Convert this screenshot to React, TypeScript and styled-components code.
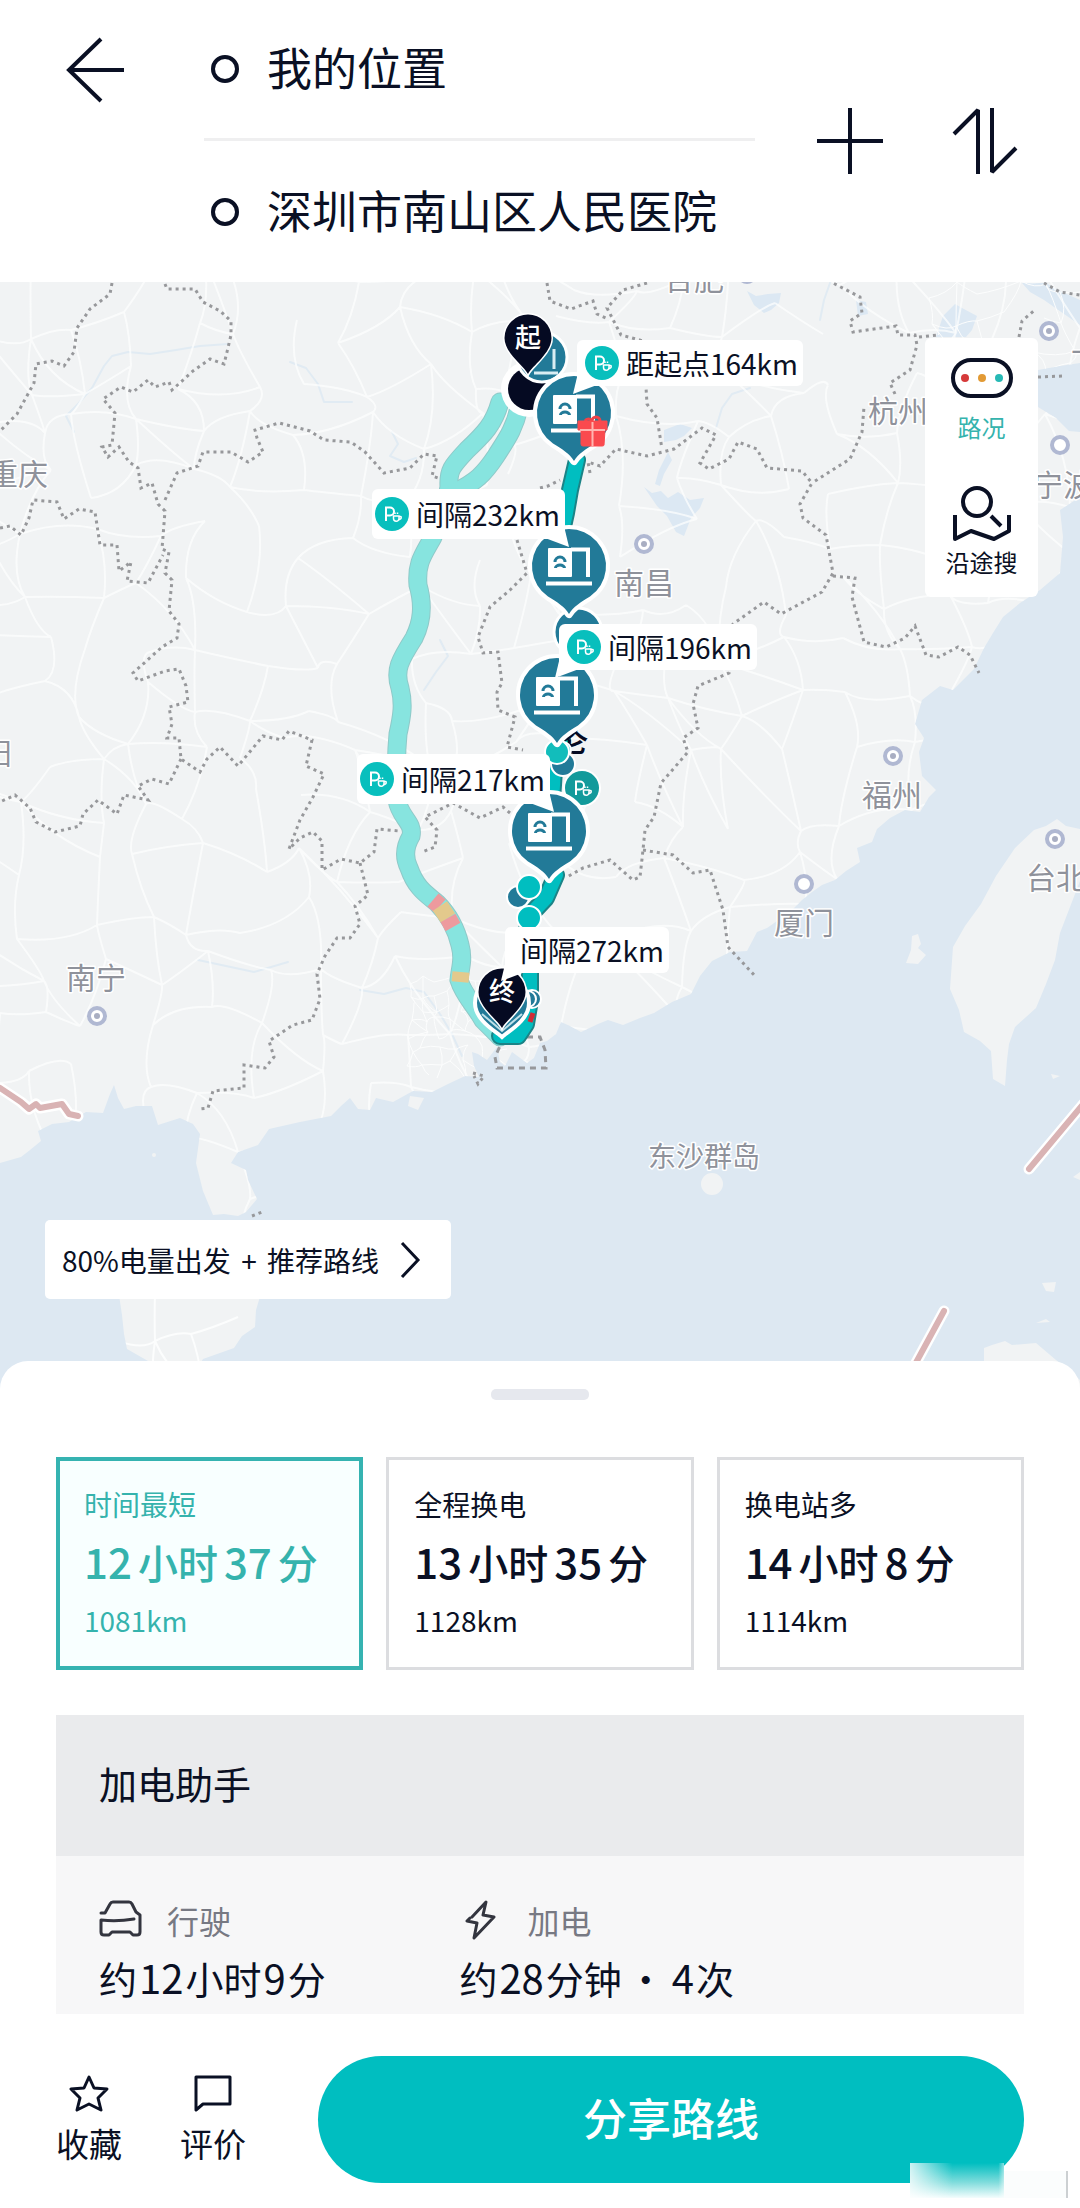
import React, { useState } from "react";
import styled, { createGlobalStyle, css } from "styled-components";

const color = {
  ink: "#0a1024",
  teal: "#00bec0",
  tealText: "#35b3ad",
  station: "#227a98",
  muted: "#777983",
  line: "#dcdde0",
};

const GlobalStyle = createGlobalStyle`
  * { box-sizing: border-box; }
  body {
    margin: 0;
    background: #fff;
    color: ${color.ink};
    font-family: "Noto Sans CJK SC", "Noto Sans", sans-serif;
  }
  button {
    margin: 0;
    padding: 0;
    border: 0;
    background: none;
    color: inherit;
    font: inherit;
    text-align: left;
    cursor: pointer;
  }
  svg { display: block; flex: none; }
`;

/* ---------- header ---------- */

const Header = styled.header`
  display: flex;
  align-items: stretch;
  padding: 0 60px 0 64px;
`;

const BackButton = styled.button`
  display: flex;
  align-items: center;
  width: 140px;
  height: 140px;
`;

const Stops = styled.div`
  flex: 1;
  min-width: 0;
`;

const Stop = styled.button`
  display: flex;
  align-items: center;
  gap: 28px;
  width: 100%;
  height: 138px;
  padding-left: 7px;
  font-size: 45px;
  line-height: 60px;
  white-space: nowrap;

  & + & {
    border-top: 3px solid #efeff0;
    height: 144px;
  }
`;

const StopName = styled.span`
  padding-bottom: 4px;
`;

const Ring = styled.span`
  width: 28px;
  height: 28px;
  border: 4px solid ${color.ink};
  border-radius: 50%;
`;

const HeaderActions = styled.div`
  display: flex;
  align-items: center;
  gap: 66px;
  margin-left: 61px;
`;

/* ---------- map ---------- */

const MapArea = styled.section`
  position: relative;
  height: 1107px;
  overflow: hidden;
  background: #dde8f2;
`;

const MapCanvas = styled.svg`
  width: 100%;
  height: 100%;
`;

const Bubble = styled.div<{ $x: number; $y: number; $tail: "left" | "right" }>`
  position: absolute;
  left: calc(50% + ${(p) => p.$x - 540}px);
  top: ${(p) => p.$y - 282}px;
  display: flex;
  align-items: center;
  gap: 7px;
  height: 46px;
  padding: 0 5px 0 8px;
  border-radius: 6px;
  background: #fff;
  font-size: 28px;
  line-height: 40px;
  white-space: nowrap;

  &::after {
    content: "";
    position: absolute;
    bottom: -8px;
    left: -4px;
    width: 28px;
    height: 26px;
    background: #fff;
    clip-path: polygon(0 100%, 20% 10%, 100% 60%);
  }

  ${(p) =>
    p.$tail === "right" &&
    css`
      height: 50px;
      padding: 0 5px 0 3px;
      &::after {
        left: auto;
        right: -4px;
        clip-path: polygon(100% 100%, 80% 10%, 0 60%);
      }
    `}
`;

const PlainBubble = styled(Bubble)`
  padding: 0 5px 0 15px;
`;

const SidePanel = styled.div`
  position: absolute;
  top: 56px;
  right: 42px;
  display: flex;
  flex-direction: column;
  align-items: center;
  gap: 40px;
  width: 113px;
  padding: 18px 0 17px;
  border-radius: 6px;
  background: #fff;
`;

const SideButton = styled.button<{ $active?: boolean }>`
  display: flex;
  flex-direction: column;
  align-items: center;
  gap: 3px;
  font-size: 24px;
  line-height: 36px;
  color: ${(p) => (p.$active ? color.tealText : color.ink)};
`;

const PlanChip = styled.button`
  position: absolute;
  left: 45px;
  top: 938px;
  display: flex;
  align-items: center;
  gap: 20px;
  height: 79px;
  padding: 0 30px 0 17px;
  border-radius: 5px;
  background: #fff;
  font-size: 28px;
  line-height: 40px;
  white-space: nowrap;
`;

const Plus = styled.span`
  margin: 0 4px;
`;

/* ---------- sheet ---------- */

const Sheet = styled.main`
  position: relative;
  margin-top: -28px;
  padding: 28px 56px 0;
  border-radius: 28px 28px 0 0;
  background: #fff;
`;

const Handle = styled.div`
  width: 98px;
  height: 11px;
  margin: 0 auto 57px;
  border-radius: 5px;
  background: #e6e8ee;
`;

const Routes = styled.div`
  display: grid;
  grid-template-columns: repeat(3, 1fr);
  gap: 23px;
`;

const RouteCard = styled.button<{ $active: boolean }>`
  display: flex;
  flex-direction: column;
  gap: 8px;
  padding: 24px 0 27px 25px;
  border: 3px solid ${color.line};
  background: #fff;
  white-space: nowrap;

  ${(p) =>
    p.$active &&
    css`
      padding: 23px 0 26px 24px;
      border: 4px solid #35b3b1;
      background: #f8ffff;
      color: ${color.tealText};
    `}
`;

const Small = styled.span`
  font-size: 28px;
  line-height: 40px;
`;

const Duration = styled.span`
  display: flex;
  align-items: baseline;
  gap: 6px;
  height: 60px;
  font-size: 40px;
  font-weight: 500;
  line-height: 60px;

  b {
    font-size: 42px;
    font-weight: 500;
    line-height: 42px;
  }
`;

const Assistant = styled.section`
  margin-top: 45px;
  background: #f7f7f8;
`;

const AssistantTitle = styled.h2`
  margin: 0;
  padding: 44px 43px 49px;
  background: #eaebed;
  font-size: 38px;
  font-weight: 400;
  line-height: 48px;
`;

const Stats = styled.dl`
  display: grid;
  grid-template-columns: 9fr 13fr;
  margin: 0;
  padding: 44px 44px 12px 43px;
`;

const StatLabel = styled.dt`
  display: flex;
  align-items: center;
  gap: 24px;
  color: ${color.muted};
  font-size: 32px;
  line-height: 40px;
`;

const StatValue = styled.dd`
  margin: 14px 0 0;
  height: 48px;
  font-size: 38px;
  line-height: 48px;
  white-space: nowrap;

  b {
    margin: 0 2px;
    font-size: 40px;
    font-weight: 400;
    line-height: 40px;
  }
  i {
    margin: 0 5px;
    font-style: normal;
  }
`;

const Footer = styled.footer`
  position: relative;
  display: flex;
  align-items: center;
  gap: 58px;
  padding: 42px 56px 25px;
`;

const Tool = styled.button`
  display: flex;
  flex-direction: column;
  align-items: center;
  gap: 10px;
  width: 66px;
  padding-bottom: 3px;
  font-size: 33px;
  line-height: 40px;
  white-space: nowrap;
`;

const ShareButton = styled.button`
  flex: 1;
  height: 127px;
  margin-left: 14px;
  padding-bottom: 6px;
  border-radius: 64px;
  background: ${color.teal};
  color: #fff;
  font-size: 44px;
  font-weight: 500;
  text-align: center;
`;

const Smudge = styled.div`
  position: absolute;
  right: 12px;
  bottom: 10px;
  display: flex;
  align-items: flex-end;

  &::before {
    content: "";
    width: 94px;
    height: 35px;
    background: linear-gradient(90deg, #ffffffcc, #ffffff00 45%, #ffffff00 94%, #ffffff88),
      linear-gradient(#00bec0, #7fdcdc 55%, #f4fdfd);
  }
  &::after {
    content: "";
    width: 62px;
    height: 27px;
    border-right: 2px solid #ccd0d2;
    background: #fbfdfd;
  }
`;

/* ---------- map data ---------- */

const mainland =
  "0,282 1080,282 1080,363 1060,366 1038,370 1020,385 1038,407 1056,418 1069,431 1080,432 1080,497 1060,510 1063,537 1060,573 1040,590 1020,603 1003,617 993,633 984,648 974,669 953,690 940,686 922,700 915,724 924,738 919,752 922,776 936,790 929,797 920,812 905,810 890,818 877,829 872,842 857,848 860,862 846,871 835,880 822,885 812,892 802,900 790,912 767,928 757,932 747,951 730,952 712,961 700,976 691,994 672,1002 654,1013 640,1018 623,1025 608,1020 598,1024 581,1032 570,1026 561,1022 556,1034 547,1041 540,1043 534,1058 527,1063 512,1052 505,1066 500,1062 497,1047 487,1060 478,1054 472,1052 474,1066 479,1077 465,1076 448,1084 432,1092 413,1091 393,1102 376,1098 370,1110 358,1109 350,1098 341,1106 331,1116 300,1122 269,1129 258,1145 238,1152 231,1163 246,1170 248,1180 257,1199 246,1212 238,1216 224,1214 213,1215 203,1191 196,1163 200,1134 193,1124 180,1118 158,1125 152,1106 136,1106 124,1109 118,1098 114,1085 110,1094 103,1113 86,1112 69,1122 52,1124 38,1131 41,1141 30,1150 21,1157 0,1163";
const hainan = "119,1295 122,1315 124,1334 127,1349 148,1361 158,1380 190,1380 203,1359 234,1348 242,1336 255,1327 256,1310 262,1290";
const taiwan =
  "1057,819 1066,826 1080,829 1080,881 1060,933 1055,960 1046,984 1036,1008 1015,1027 1009,1044 1007,1060 1005,1086 993,1079 991,1051 980,1041 964,1032 959,1010 950,989 953,947 965,926 981,904 996,876 1015,848 1034,830 1046,826";
const luzon = "984,1348 992,1345 1005,1341 1012,1345 1036,1343 1056,1360 1080,1380 1080,1395 984,1395";

const lakes = [
  "644,487 652,493 661,491 668,498 678,492 690,500 704,498 700,508 691,518 684,536 676,532 667,516 657,506",
  "936,337 943,316 955,304 962,308 977,316 972,330 966,337",
  "747,291 756,296 768,294 781,293 779,303 771,310 764,313 754,305",
  "664,430 680,424 692,428 684,436 676,440 664,442",
  "1022,283 1046,283 1062,292 1080,300 1080,325 1064,314 1044,300 1030,292",
  "668,452 672,460 664,474 660,486 655,484 659,470",
  "856,300 866,302 868,314 858,316",
];

const rivers = [
  "74,432 66,416 78,404 92,388 104,366 112,356 128,352 150,354 176,350 200,346 228,344",
  "290,362 306,368 318,384 324,402 336,402 352,402",
  "392,432 398,444 390,456 404,462 416,458",
  "716,428 722,408 732,394 750,388",
  "820,320 824,300 830,283",
  "360,990 384,994 406,988 424,992 440,1014 452,1034 462,1056",
  "198,960 226,966 254,972 288,962",
  "440,640 448,656 436,672 424,690",
];

const borders = [
  "112,283 110,294 90,309 77,328 74,352 64,366 52,361 36,364 34,383 17,414 0,431",
  "165,284 167,289 195,289 203,302 220,311 231,321 231,335 227,352 224,364 210,359 193,371 172,390 169,382 155,387 148,380 133,392 121,387 103,399 115,413 112,445 102,447 108,457 119,447 129,462 138,468 141,488 152,483 158,504 165,511 162,549 169,552 165,573 172,580 169,611 179,624 177,638 162,647 133,673 138,681 165,671 179,669 186,686 188,702 169,707 172,724 167,738 179,738 181,759 200,772 207,759 220,747 238,766 263,736 282,740 289,731 312,740 306,766 324,774 313,797 300,820 289,849 300,838 313,832 322,841 322,870 341,859 360,863 374,852 377,829 399,831",
  "360,863 368,895 355,906 360,924 350,938 337,938 325,956 317,974 320,999 312,1020 293,1025 269,1041 274,1057 265,1068 244,1065 244,1088 213,1091 208,1108 200,1109",
  "165,500 177,473 198,466 203,452 231,452 248,462 263,452 257,438 255,430 279,423 310,431 324,440 351,442 365,452 384,473 410,468 424,454 437,456 432,476 444,480",
  "0,528 10,526 21,535 29,518 33,500 57,502 64,519 79,509 95,512 100,545 117,545 119,571 131,562 127,581 148,583 163,555",
  "181,759 169,784 152,779 138,786 148,800 124,795 117,814 98,800 83,814 80,826 55,832 36,822 30,808 15,795 0,802",
  "517,540 527,573 510,590 490,607 478,637 483,653 498,652 502,683 497,692 498,710 515,717 507,747 523,750",
  "510,813 503,807 480,818 453,803 425,817 437,830 435,847 422,852",
  "547,283 550,301 571,309 593,301 597,314 606,318",
  "647,283 623,290 607,308 621,335 647,342 646,387 647,404 657,418 662,449",
  "540,488 548,486 560,480",
  "590,473 588,462 600,466 616,449 647,456 674,449 702,428 716,435 700,463 709,469 729,459 738,442 757,449 767,468 802,471 812,483 800,504 803,518 826,535 833,573 822,592 781,614 764,602 747,614 733,624 730,650 729,673 698,686 693,704 698,728 683,738 688,752 661,783 654,817 645,830 643,850 640,877 633,880 610,860 583,868 567,877",
  "643,850 673,855 693,873 710,870 723,910 728,947 743,963 755,976",
  "833,576 855,578 852,597 864,642 886,647 905,638 915,626 926,655 939,657 958,647 970,655 979,673",
  "815,481 850,459 862,432 864,407",
  "895,394 890,383 910,370 917,345 915,335 898,335 896,326 853,332 850,321 862,313 860,297 833,283",
  "919,337 939,335",
  "1019,337 1022,321 1036,309",
  "1044,283 1060,292 1080,295",
  "1038,377 1063,376",
  "252,1216 262,1212",
  "473,1073 484,1076 478,1084 474,1076",
];

const cities = [
  { name: "合肥", x: 664, y: 291, dot: [747, 274], hollow: false },
  { name: "南昌", x: 614, y: 595, dot: [644, 544], hollow: false },
  { name: "福州", x: 862, y: 807, dot: [893, 756], hollow: false },
  { name: "厦门", x: 774, y: 935, dot: [804, 884], hollow: true },
  { name: "台北", x: 1026, y: 890, dot: [1055, 839], hollow: false },
  { name: "南宁", x: 66, y: 990, dot: [97, 1016], hollow: false },
  { name: "重庆", x: -12, y: 486 },
  { name: "贵阳", x: -48, y: 765 },
  { name: "杭州", x: 868, y: 423 },
  { name: "宁波", x: 1033, y: 497, dot: [1060, 445], hollow: true },
  { name: "上海", x: 1071, y: 352, dot: [1049, 331], hollow: false },
];

/* Thin road mesh: a jittered grid of junctions joined by slightly bent segments. */
const rand = (i: number, j: number, k: number) => {
  const v = Math.sin(i * 127.1 + j * 311.7 + k * 74.7) * 43758.5453;
  return v - Math.floor(v);
};

function roadMesh(x0: number, y0: number, cols: number, rows: number, step: number, keep: number) {
  const node = (i: number, j: number) => [
    x0 + i * step + (rand(i, j, 1) - 0.5) * step * 0.8,
    y0 + j * step + (rand(i, j, 2) - 0.5) * step * 0.8,
  ];
  let d = "";
  const join = (i: number, j: number, u: number, v: number, k: number, share: number) => {
    if (rand(i, j, k) > share) return;
    const [ax, ay] = node(i, j);
    const [bx, by] = node(u, v);
    const cx = (ax + bx) / 2 + (rand(i, j, k + 3) - 0.5) * step * 0.5;
    const cy = (ay + by) / 2 + (rand(i, j, k + 4) - 0.5) * step * 0.5;
    d += `M${ax.toFixed(0)} ${ay.toFixed(0)}Q${cx.toFixed(0)} ${cy.toFixed(0)} ${bx.toFixed(0)} ${by.toFixed(0)}`;
  };
  for (let i = 0; i < cols; i++)
    for (let j = 0; j < rows; j++) {
      join(i, j, i + 1, j, 5, keep);
      join(i, j, i, j + 1, 6, keep);
      join(i, j, i + 1, j + 1, 11, keep / 4);
    }
  return d;
}

const roads = roadMesh(-20, 270, 22, 19, 54, 0.74);
const deltaRoads = roadMesh(410, 980, 7, 7, 14, 0.7);
const eastRoads = roadMesh(930, 290, 6, 4, 28, 0.6);
const islandRoads = roadMesh(110, 1280, 3, 2, 48, 0.8);

const altRoute = [
  "M500 402C494 424 484 434 467 450C452 466 448 470 449 487C446 506 440 520 433 537C424 554 416 562 418 585C424 606 422 622 414 638C400 660 394 670 400 688C404 704 402 716 398 734C396 756 396 780 397 800C400 818 414 822 411 836C404 848 404 858 409 868C416 888 426 894 437 903C448 914 456 928 460 945C464 960 460 968 459 980C464 996 474 1004 483 1020L500 1037",
  "M519 408C514 430 506 440 496 456C484 474 476 482 455 492",
];
const mainRoute = ["577,460 570,490 566,513 560,540", "562,740 554,770 552,800", "556,875 546,898 530,915 524,945 530,970 530,1000 526,1024 518,1036 500,1036"];

/* ---------- drawings ---------- */

const line = (pts: string, stroke: string, w: number, key?: React.Key) => (
  <polyline key={key} points={pts} fill="none" stroke={stroke} strokeWidth={w} strokeLinejoin="round" strokeLinecap="round" />
);

const pinShape = "M0 48C-4 41-12 36-21 30.500A37 37 0 1 1 21 30.500C12 36 4 41 0 48Z";
const dropShape = "M0 36C-4 28-23.500 15-23.500 0A23.500 23.500 0 1 1 23.500 0C23.500 15 4 28 0 36Z";

function StationPin({ x, y }: { x: number; y: number }) {
  return (
    <g transform={`translate(${x} ${y})`}>
      <path d={pinShape} fill={color.station} stroke="#fff" strokeWidth="8" paintOrder="stroke" strokeLinejoin="round" />
      <rect x="-21" y="-18" width="24" height="29" rx="1" fill="#fff" />
      <path d="M2 -16.500H19V11" fill="none" stroke="#fff" strokeWidth="4" />
      <path d="M-23 17.500H23" stroke="#fff" strokeWidth="4" />
      <path d="M-14 -4A5 5 0 0 1 -4 -4M-13.500 2A4.500 3 0 0 1 -4.500 2" fill="none" stroke={color.station} strokeWidth="3" />
    </g>
  );
}

function DropPin({ x, y, label }: { x: number; y: number; label: string }) {
  return (
    <g transform={`translate(${x} ${y})`}>
      <path d={dropShape} fill="#050a22" stroke="#fff" strokeWidth="3" paintOrder="stroke" />
      <text y="9" fontSize="26" fontWeight="500" fill="#fff" textAnchor="middle">
        {label}
      </text>
    </g>
  );
}

const RestMark = ({ fill = "#08bfbd" }: { fill?: string }) => (
  <>
    <circle cx="17" cy="17" r="17" fill={fill} />
    <path d="M11 24V10.500H15A4 4 0 0 1 15 18.500H11" fill="none" stroke="#fff" strokeWidth="2" />
    <path d="M18.500 19H24V21.500A2.700 2.700 0 0 1 18.500 21.500ZM24 20Q27 18.500 26 21.500L24 23M20 17V15.500M22.500 17V15.500" fill="none" stroke="#fff" strokeWidth="1.500" />
  </>
);

const RestIcon = () => (
  <svg width="34" height="34" viewBox="0 0 34 34" aria-hidden="true">
    <RestMark />
  </svg>
);

const Gift = () => (
  <g transform="translate(576 415)">
    <path d="M9 6A4 4 0 0 1 16 6A4 4 0 0 1 24 6" fill="none" stroke="#ef4348" strokeWidth="3" />
    <path d="M2 6H31V15H2Z M5 15H29L28 30Q28 31 26 31H7Q5 31 5 29Z" fill="#fa4a4e" stroke="#fa4a4e" strokeLinejoin="round" />
    <path d="M16.500 7V31M4 15H29" stroke="#ffb5b0" strokeWidth="2" />
  </g>
);

function RouteMap() {
  return (
    <MapCanvas viewBox="0 282 1080 1107" preserveAspectRatio="xMidYMin slice" role="img" aria-label="路线地图">
      <defs>
        <clipPath id="land">
          <polygon points={mainland} />
        </clipPath>
        <clipPath id="island">
          <polygon points={hainan} />
        </clipPath>
      </defs>
      <g fill="#f1f3f4">
        <polygon points={mainland} />
        <polygon points={hainan} />
        <polygon points={taiwan} />
        <polygon points={luzon} />
        <path d="M912 936L918 934L921 944L918 948L926 955L918 964L906 963L911 950Z" />
        <circle cx="712" cy="1184" r="11" />
        <circle cx="154" cy="1155" r="2" />
        <path d="M1042 1283L1056 1282L1054 1292L1046 1291ZM1036 1323L1046 1319L1050 1322ZM1051 1074L1060 1076L1053 1079ZM1073 1177L1080 1172V1180ZM410 1096L424 1098L418 1110L408 1106Z" />
      </g>
      <g clipPath="url(#land)">
        {lakes.map((p, i) => (
          <polygon key={i} points={p} fill="#dce8f3" />
        ))}
        {rivers.map((p, i) => line(p, "#e1ebf3", 2, i))}
        <g fill="none" stroke="#fcfdfd" strokeWidth="1">
          <path d={roads} strokeWidth="2" opacity="0.75" />
          <path d={deltaRoads} />
          <path d={eastRoads} />
        </g>
      </g>
      <g clipPath="url(#island)">
        <path d={islandRoads} fill="none" stroke="#fcfdfd" strokeWidth="2" />
      </g>
      <g fill="none" stroke="#97989b" strokeWidth="3" strokeDasharray="3 4">
        {borders.map((p, i) => (
          <polyline key={i} points={p} />
        ))}
        <polyline points="527,1037 540,1037 545,1050 546,1068 497,1068 495,1057 500,1046" strokeDasharray="6 5" />
      </g>
      {["0,1088 21,1102 29,1109 36,1104 40,1108 62,1104 69,1114 78,1116", "1090,1096 1029,1169", "944,1311 912,1370"].map((p, i) => (
        <g key={i}>
          {line(p, "#fff", 11)}
          {line(p, "#d9b3b4", 6)}
        </g>
      ))}

      <g fontSize="30" fill="#8f929b" stroke="#fff" strokeWidth="3" paintOrder="stroke" strokeLinejoin="round">
        {cities.map((c) => (
          <text key={c.name} x={c.x} y={c.y - 1}>
            {c.name}
          </text>
        ))}
        <text x="648" y="1167" fontSize="28">
          东沙群岛
        </text>
      </g>
      {cities.map(
        (c) =>
          c.dot && (
            <g key={c.name}>
              <circle cx={c.dot[0]} cy={c.dot[1]} r="8" fill="#fff" stroke="#b0b8d2" strokeWidth="4" />
              {!c.hollow && <circle cx={c.dot[0]} cy={c.dot[1]} r="3" fill="#a9aec2" />}
            </g>
          ),
      )}

      <g fill="none" strokeLinecap="round">
        {altRoute.map((d, i) => (
          <path key={i} d={d} stroke="#8fc9c8" strokeWidth="19" />
        ))}
        {altRoute.map((d, i) => (
          <path key={i} d={d} stroke="#87e4df" strokeWidth="17" />
        ))}
      </g>
      <g fill="none" strokeWidth="17">
        <path d="M433 900L440 906" stroke="#ed9a9e" />
        <path d="M440 906L448 918" stroke="#e3c98c" />
        <path d="M448 918L453 927" stroke="#ed9a9e" />
        <path d="M461 972L460 982" stroke="#e3c98c" />
      </g>
      {mainRoute.map((p, i) => line(p, "#1b8386", 18, i))}
      {mainRoute.map((p, i) => line(p, color.teal, 14, i))}
      <path d="M533 1013L530 1022" stroke="#d22a35" strokeWidth="5" />

      <text x="562" y="752" fontSize="26" fontWeight="700" fill="#050a22">
        仑
      </text>
      <g stroke="#fff" strokeWidth="2">
        <circle cx="578" cy="632" r="24" fill={color.station} strokeWidth="3" />
        <circle cx="563" cy="750" r="8" fill={color.teal} />
        <circle cx="563" cy="764" r="12" fill={color.station} />
        <circle cx="557" cy="752" r="12" fill="#12bdbb" />
        <circle cx="518" cy="897" r="11" fill={color.station} />
        <circle cx="529" cy="887" r="12" fill={color.teal} />
        <circle cx="529" cy="918" r="12" fill={color.teal} />
        <circle cx="532" cy="999" r="9" fill={color.station} />
        <circle cx="528" cy="999" r="8" fill={color.station} />
      </g>
      <g transform="translate(565 771)">
        <circle cx="17" cy="17" r="19" fill="#fff" />
        <RestMark fill="#139a9b" />
      </g>

      <circle cx="529" cy="389" r="28" fill="#fff" />
      <circle cx="529" cy="389" r="21" fill="#050a22" />
      <g transform="translate(542 357)">
        <circle r="25" fill={color.station} stroke="#fff" strokeWidth="3" />
        <path d="M-8 16H16M12 -8V12" stroke="#d9edf3" strokeWidth="3" />
      </g>
      <StationPin x={549} y={831} />
      <StationPin x={557} y={695} />
      <StationPin x={569} y={566} />
      <StationPin x={574} y={413} />
      <Gift />
      <path d="M0 34C-5 29-27 18-27 0A27 27 0 1 1 27 0C27 18 5 29 0 34Z" transform="translate(502 1003)" fill={color.station} stroke="#fff" strokeWidth="4" />
      <path d="M482 1014L502 1031L522 1014" fill="none" stroke="#bfe0e8" strokeWidth="2" />
      <DropPin x={528} y={338} label="起" />
      <DropPin x={502} y={992} label="终" />
    </MapCanvas>
  );
}

/* ---------- page ---------- */

const stops = ["我的位置", "深圳市南山区人民医院"];

const bubbles = [
  { text: "距起点164km", x: 577, y: 340, tail: "left" as const },
  { text: "间隔232km", x: 372, y: 489, tail: "right" as const },
  { text: "间隔196km", x: 559, y: 624, tail: "left" as const },
  { text: "间隔217km", x: 357, y: 754, tail: "right" as const },
];

const plans = [
  { name: "时间最短", hours: "12", minutes: "37", distance: "1081km" },
  { name: "全程换电", hours: "13", minutes: "35", distance: "1128km" },
  { name: "换电站多", hours: "14", minutes: "8", distance: "1114km" },
];

export default function App() {
  const [plan, setPlan] = useState(0);
  return (
    <>
      <GlobalStyle />
      <Header>
        <BackButton aria-label="返回">
          <svg width="62" height="66" viewBox="0 0 62 66" fill="none" stroke={color.ink} strokeWidth="4">
            <path d="M37 2L5 33L37 64M5 33H60" />
          </svg>
        </BackButton>
        <Stops>
          {stops.map((s) => (
            <Stop key={s}>
              <Ring />
              <StopName>{s}</StopName>
            </Stop>
          ))}
        </Stops>
        <HeaderActions>
          <button aria-label="添加途经点">
            <svg width="68" height="68" viewBox="0 0 68 68" stroke={color.ink} strokeWidth="4">
              <path d="M34 1V67M1 34H67" />
            </svg>
          </button>
          <button aria-label="交换起终点">
            <svg width="70" height="68" viewBox="0 0 70 68" fill="none" stroke={color.ink} strokeWidth="4" strokeLinejoin="bevel">
              <path d="M4 27L28 3V67M42 1V65L66 41" />
            </svg>
          </button>
        </HeaderActions>
      </Header>

      <MapArea>
        <RouteMap />
        {bubbles.map((b) => (
          <Bubble key={b.text} $x={b.x} $y={b.y} $tail={b.tail}>
            <RestIcon />
            {b.text}
          </Bubble>
        ))}
        <PlainBubble $x={505} $y={927} $tail="left">
          间隔272km
        </PlainBubble>
        <SidePanel>
          <SideButton $active>
            <svg width="64" height="50" viewBox="0 0 64 50">
              <rect x="3" y="4" width="58" height="36" rx="18" fill="none" stroke={color.ink} strokeWidth="4" />
              <circle cx="15" cy="22" r="4" fill="#d63a3a" />
              <circle cx="32" cy="22" r="4" fill="#e29a35" />
              <circle cx="49" cy="22" r="4" fill="#27b9b5" />
            </svg>
            路况
          </SideButton>
          <SideButton>
            <svg width="62" height="56" viewBox="0 0 62 56" fill="none" stroke={color.ink} strokeWidth="4" strokeLinejoin="round">
              <circle cx="26" cy="17" r="14" />
              <path d="M40 31L50 41M4 30V54L20 46L43 54L58 46V30" />
            </svg>
            沿途搜
          </SideButton>
        </SidePanel>
        <PlanChip>
          <span>
            80%电量出发 <Plus>+</Plus> 推荐路线
          </span>
          <svg width="22" height="38" viewBox="0 0 22 38" fill="none" stroke={color.ink} strokeWidth="3">
            <path d="M3 2L19 19L3 36" />
          </svg>
        </PlanChip>
      </MapArea>

      <Sheet>
        <Handle />
        <Routes>
          {plans.map((p, i) => (
            <RouteCard key={p.name} $active={i === plan} aria-pressed={i === plan} onClick={() => setPlan(i)}>
              <Small>{p.name}</Small>
              <Duration>
                <b>{p.hours}</b>小时<b>{p.minutes}</b>分
              </Duration>
              <Small>{p.distance}</Small>
            </RouteCard>
          ))}
        </Routes>
        <Assistant>
          <AssistantTitle>加电助手</AssistantTitle>
          <Stats>
            <div>
              <StatLabel>
                <svg width="44" height="40" viewBox="0 0 44 40" fill="none" stroke="#33353f" strokeWidth="3" strokeLinejoin="round" strokeLinecap="round">
                  <path d="M2 13H6L11 4Q12 2 14 2H30Q32 2 33 4L37 12L41 15V32Q41 35 38 35H34L31 32H13L10 35H5Q2 35 2 32V20Q18 22 35 19" />
                </svg>
                行驶
              </StatLabel>
              <StatValue>
                约<b>12</b>小时<b>9</b>分
              </StatValue>
            </div>
            <div>
              <StatLabel>
                <svg width="44" height="40" viewBox="0 0 44 40" fill="none" stroke="#33353f" strokeWidth="3" strokeLinejoin="round" strokeLinecap="round">
                  <path d="M13 17L27 2L24 15L35 17L15 38L18 23L8 21L11 18" />
                </svg>
                加电
              </StatLabel>
              <StatValue>
                约<b>28</b>分钟<i>·</i>
                <b>4</b>次
              </StatValue>
            </div>
          </Stats>
        </Assistant>
      </Sheet>

      <Footer>
        <Tool>
          <svg width="40" height="40" viewBox="0 0 40 40" fill="none" stroke={color.ink} strokeWidth="3" strokeLinejoin="round">
            <path d="M20 4L25 15L38 16L29 25L32 37L20 31L8 37L11 25L2 16L15 15Z" />
          </svg>
          收藏
        </Tool>
        <Tool>
          <svg width="40" height="40" viewBox="0 0 40 40" fill="none" stroke={color.ink} strokeWidth="3" strokeLinejoin="round">
            <path d="M3 4H37V31H10L3 37Z" />
          </svg>
          评价
        </Tool>
        <ShareButton>分享路线</ShareButton>
        <Smudge />
      </Footer>
    </>
  );
}
